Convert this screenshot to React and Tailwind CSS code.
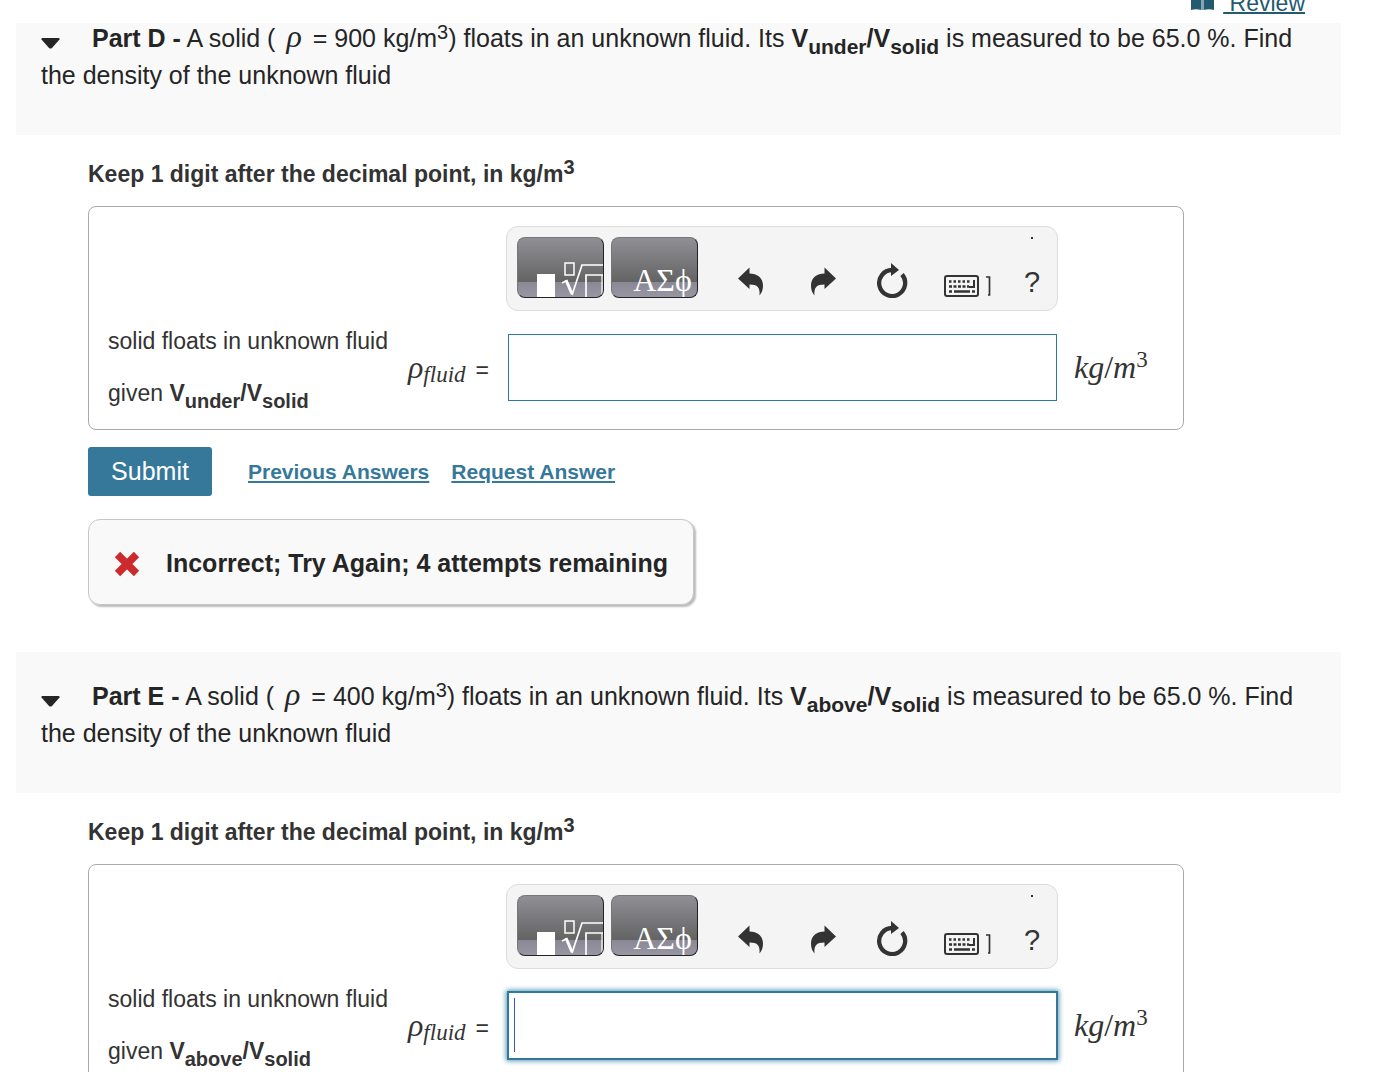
import clsx from "clsx";
import { useState } from "react";

const parts = [
    {id: 'D', density: 900, ratio: 'under', attempts: 4},
    {id: 'E', density: 400, ratio: 'above', attempts: null},
];

function Sub({small, children}) {
    return <sub className={clsx('static align-[-7px]', small ? 'text-[20px]' : 'text-[21px]')}>{children}</sub>;
}

function Sup({children}) {
    return <sup className="static align-[8px] text-[20px]">{children}</sup>;
}

function Ratio({name, small}) {
    return (
        <b>V<Sub small={small}>{name}</Sub>/V<Sub small={small}>solid</Sub></b>
    );
}

function TemplatesIcon() {
    return (
        <svg viewBox="0 0 85 59" className="h-full w-full" fill="none" stroke="#fff">
            <rect x="19" y="36" width="18" height="25" fill="#fff" stroke="none" />
            <rect x="47" y="25" width="9" height="12" strokeWidth="1.5" />
            <path d="M44 45l4-2" strokeWidth="1.5" />
            <path d="M48 42l6 14" strokeWidth="3" />
            <path d="M54 57l10-30h22" strokeWidth="1.7" />
            <path d="M68 60V37h17" strokeWidth="1.7" />
            <path d="M84 37v22" strokeWidth="1.2" />
        </svg>
    );
}

function UndoIcon({className}) {
    return (
        <svg width="26" height="31" viewBox="0 0 26 31" className={className} fill="#333">
            <path d="M0 11.500L11.500 .5v6C19 6.500 25 10.500 25 18.500c0 4-1 7-3.500 10c.8-8-2-11-10-11v4.500z" />
        </svg>
    );
}

function ResetIcon() {
    return (
        <svg width="32" height="36" viewBox="0 0 32 36">
            <path d="M26 12.500A13 13 0 1 1 16 8" fill="none" stroke="#333" strokeWidth="4.300" />
            <path d="M15 1l8 7l-8 6z" fill="#333" />
        </svg>
    );
}

function KeyboardIcon() {
    return (
        <svg width="48" height="24" viewBox="0 0 48 24" fill="none" stroke="#333">
            <rect x="1" y="2" width="33" height="20" rx="2" strokeWidth="2" />
            <path d="M5 7.500h21" strokeWidth="2.500" strokeDasharray="2.500 2" />
            <path d="M5 12.500h20" strokeWidth="2.500" strokeDasharray="3 1.500" />
            <path d="M30 6v7h-5" strokeWidth="2" />
            <path d="M5 17.500h3M10 17.500h16M28 17.500h3" strokeWidth="2.500" />
            <path d="M42 3h3.500v18H44" strokeWidth="1.700" />
        </svg>
    );
}

function Toolbar() {
    const dark = 'h-[61px] w-[87px] shrink-0 overflow-hidden rounded-lg border border-t-[#77767b] border-l-[#77767b] border-r-[#222] border-b-[#222] bg-[linear-gradient(#908f95,#636363_75%,#8a8894_75%,#9896a2)]';
    return (
        <div className="flex h-[85px] items-start rounded-xl border border-[#dcdcdc] bg-[#f4f4f4] px-2.5 pt-2.5">
            <button type="button" aria-label="Templates" className={dark}>
                <TemplatesIcon />
            </button>
            <button type="button" aria-label="Symbols" className={clsx(dark, 'ml-[7px] pl-4 pt-6 font-["Liberation_Serif",serif] text-[32px] leading-9 text-white')}>
                ΑΣϕ
            </button>
            <div className="flex h-[61px] flex-1 items-end pl-10">
                <button type="button" aria-label="Undo" className="mr-[46px]">
                    <UndoIcon />
                </button>
                <button type="button" aria-label="Redo" className="mr-10">
                    <UndoIcon className="-scale-x-100" />
                </button>
                <button type="button" aria-label="Reset" className="mr-9">
                    <ResetIcon />
                </button>
                <button type="button" aria-label="Keyboard shortcuts" className="mr-8">
                    <KeyboardIcon />
                </button>
                <button type="button" aria-label="Help" className="flex h-full flex-col items-center justify-between text-[29px] leading-8 text-[#333]">
                    <span className="size-0.5 bg-[#333]"></span>
                    <span>?</span>
                </button>
            </div>
        </div>
    );
}

function AnswerBox({part}) {
    const [value, setValue] = useState('');
    const inputId = 'answer-' + part.id;
    const active = part.attempts === null;
    return (
        <div className="grid max-w-[1096px] grid-cols-[300px_98px_1fr_106px] items-center rounded-lg border border-[#aaa] px-[19px] pt-[19px] pb-2.5 text-[#333]">
            <div className="col-start-3 mb-1">
                <Toolbar />
            </div>
            <div className="col-start-1 text-[23px] leading-[52px]">
                solid floats in unknown fluid<br />
                given <Ratio name={part.ratio} small />
            </div>
            <label htmlFor={inputId} className="font-['Liberation_Serif',serif] text-[32px] whitespace-nowrap">
                <i>ρ<sub className="static align-[-4px] text-[23px]">fluid</sub></i>
                <span className="ml-2.5 font-['Liberation_Sans',sans-serif] text-[23px]">=</span>
            </label>
            <div className={clsx('mr-px ml-0.5 flex h-[67px] items-center border border-[#2e7a9e] bg-white pl-[5px]', active && 'shadow-[0_0_0_1px_#2e7a9e,0_0_5px_2px_#5c97b3]')}>
                {active && <span className="h-[54px] w-px bg-[#2f5bd7]"></span>}
                <input
                    id={inputId}
                    type="text"
                    className="h-full w-full text-2xl outline-none"
                    value={value}
                    onChange={e => setValue(e.target.value)}
                />
            </div>
            <div className="pl-4 font-['Liberation_Serif',serif] text-[32px]">
                <i>kg</i>/<i>m</i><sup className="static align-[11px] text-[23px]">3</sup>
            </div>
        </div>
    );
}

function Part({part}) {
    const [open, setOpen] = useState(true);
    return (
        <section>
            <div className="mr-[17px] bg-[#f9f9f9] pt-[26px] pr-9 pb-[41px] pl-[25px] text-[25px] leading-[37px] text-[#252525]">
                <button type="button" aria-label="Toggle part" className="mr-8" onClick={() => setOpen(!open)}>
                    <svg width="19" height="12" viewBox="0 0 19 12" fill="#252525" className="translate-y-0.5">
                        <path d="M1 1h17q1 .5 .5 1.500L11 11q-1.500 1-3 0L.5 2.500Q0 1.500 1 1z" />
                    </svg>
                </button>
                <b>Part {part.id} -</b> A solid ( <i className="mx-1 font-['Liberation_Serif',serif] text-[32px] leading-none">ρ</i> = {part.density} kg/m<Sup>3</Sup>) floats in an unknown fluid. Its <Ratio name={part.ratio} /> is measured to be 65.0 %. Find the density of the unknown fluid
            </div>
            {open && (
                <form className="mx-[72px] pt-[21px]" onSubmit={e => e.preventDefault()}>
                    <h2 className="mb-[14px] text-[23px] leading-9 font-bold text-[#333]">
                        Keep 1 digit after the decimal point, in kg/m<Sup>3</Sup>
                    </h2>
                    <AnswerBox part={part} />
                    <div className="mt-[17px] flex items-center text-[21px] font-bold text-[#36789a]">
                        <button type="submit" className="mr-9 h-[49px] w-[124px] rounded-[3px] bg-[#36789a] text-[25px] font-normal text-white">
                            Submit
                        </button>
                        <a href="#previous" className="mr-[22px] underline decoration-2 underline-offset-2">Previous Answers</a>
                        <a href="#request" className="underline decoration-2 underline-offset-2">Request Answer</a>
                    </div>
                    {part.attempts && (
                        <div className="mt-[23px] mb-[47px] flex h-[86px] w-fit items-center rounded-xl border border-[#c6c6c6] bg-[#f9f9f9] px-[25px] pt-1 text-[25px] font-bold text-[#252525] shadow-[2px_2px_2px_#bbb]">
                            <svg width="26" height="26" viewBox="0 0 26 26" className="mr-[26px]" stroke="#cc2a2d" strokeWidth="7.500" strokeLinejoin="round">
                                <path d="M3.500 3.500l19 19M22.500 3.500l-19 19" />
                            </svg>
                            Incorrect; Try Again; {part.attempts} attempts remaining
                        </div>
                    )}
                </form>
            )}
        </section>
    );
}

export default function App() {
    return (
        <main className="h-screen overflow-hidden bg-white px-4 font-['Liberation_Sans',Arial,sans-serif]">
            <header className="sticky top-0 z-10 -mb-[29px] flex h-[23px] items-end justify-end overflow-hidden bg-white pr-[53px] pb-2 text-[23px] leading-6 text-[#235a70]">
                <svg width="24" height="24" viewBox="0 0 24 24" className="mr-2" fill="#235a70">
                    <path d="M0 0h10.500v19Q5 17.500 0 19zM12.500 0H23v19q-5-1.500-10.500 0z" />
                    <path d="M10.500 0h2v19h-2z" fill="#7fa3b1" />
                </svg>
                <a href="#review" className="whitespace-pre underline decoration-2 underline-offset-1"> Review</a>
            </header>
            {parts.map(part => (
                <Part key={part.id} part={part} />
            ))}
        </main>
    );
}
